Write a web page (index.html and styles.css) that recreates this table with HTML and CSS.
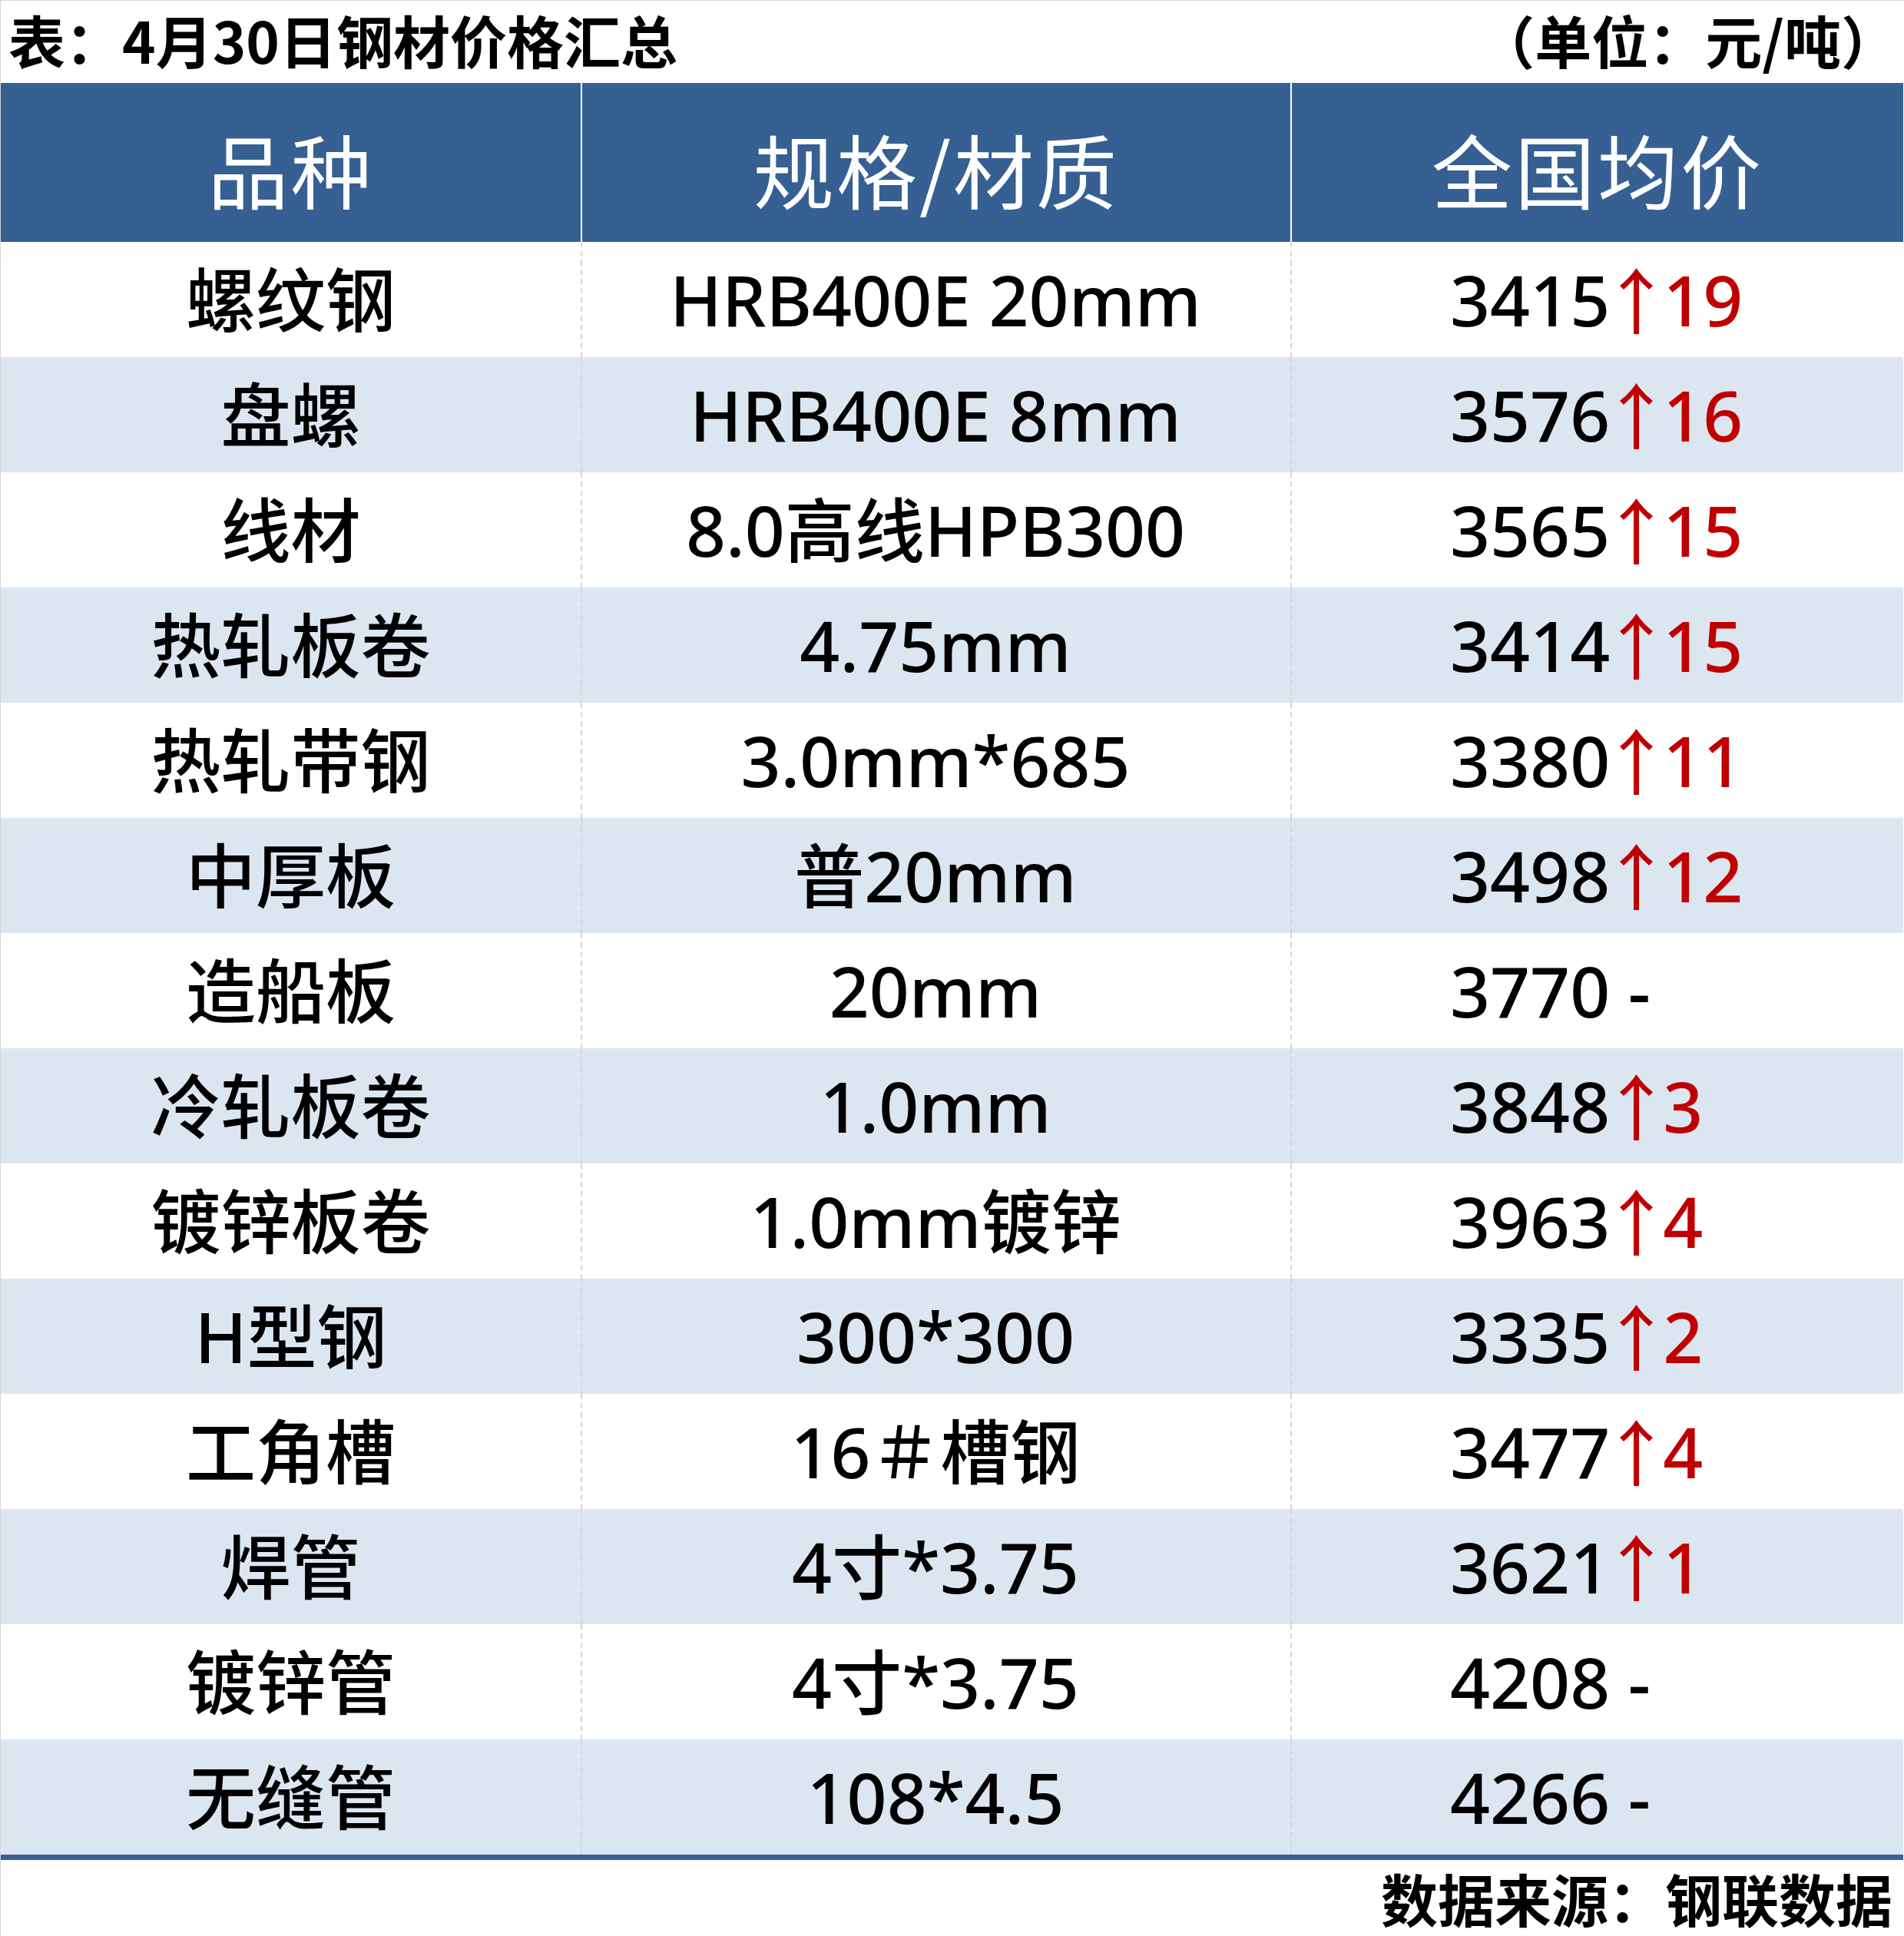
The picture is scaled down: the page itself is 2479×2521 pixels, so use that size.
FILE: index.html
```html
<!DOCTYPE html>
<html lang="zh-CN">
<head>
<meta charset="utf-8">
<title>4月30日钢材价格汇总</title>
<link rel="stylesheet" href="styles.css">
</head>
<body>
<div class="page">
  <div class="title-bar">
    <span class="title">表：4月30日钢材价格汇总</span>
    <span class="unit">（单位：元/吨）</span>
  </div>
  <div class="table">
    <div class="row head">
      <div class="cell c1">品种</div>
      <div class="cell c2">规格/材质</div>
      <div class="cell c3">全国均价</div>
    </div>
    <div class="row">
      <div class="cell c1">螺纹钢</div>
      <div class="cell c2">HRB400E 20mm</div>
      <div class="cell c3"><span class="price">3415</span><svg class="up" viewBox="0 0 69 86"><path d="M34.5 0 Q43 13 56 23 L51 28 Q42 20 34.5 11 Q27 20 18 28 L13 23 Q26 13 34.5 0 Z"/><rect x="31" y="6" width="7" height="80"/></svg><span class="chg">19</span></div>
    </div>
    <div class="row alt">
      <div class="cell c1">盘螺</div>
      <div class="cell c2">HRB400E 8mm</div>
      <div class="cell c3"><span class="price">3576</span><svg class="up" viewBox="0 0 69 86"><path d="M34.5 0 Q43 13 56 23 L51 28 Q42 20 34.5 11 Q27 20 18 28 L13 23 Q26 13 34.5 0 Z"/><rect x="31" y="6" width="7" height="80"/></svg><span class="chg">16</span></div>
    </div>
    <div class="row">
      <div class="cell c1">线材</div>
      <div class="cell c2">8.0高线HPB300</div>
      <div class="cell c3"><span class="price">3565</span><svg class="up" viewBox="0 0 69 86"><path d="M34.5 0 Q43 13 56 23 L51 28 Q42 20 34.5 11 Q27 20 18 28 L13 23 Q26 13 34.5 0 Z"/><rect x="31" y="6" width="7" height="80"/></svg><span class="chg">15</span></div>
    </div>
    <div class="row alt">
      <div class="cell c1">热轧板卷</div>
      <div class="cell c2">4.75mm</div>
      <div class="cell c3"><span class="price">3414</span><svg class="up" viewBox="0 0 69 86"><path d="M34.5 0 Q43 13 56 23 L51 28 Q42 20 34.5 11 Q27 20 18 28 L13 23 Q26 13 34.5 0 Z"/><rect x="31" y="6" width="7" height="80"/></svg><span class="chg">15</span></div>
    </div>
    <div class="row">
      <div class="cell c1">热轧带钢</div>
      <div class="cell c2">3.0mm*685</div>
      <div class="cell c3"><span class="price">3380</span><svg class="up" viewBox="0 0 69 86"><path d="M34.5 0 Q43 13 56 23 L51 28 Q42 20 34.5 11 Q27 20 18 28 L13 23 Q26 13 34.5 0 Z"/><rect x="31" y="6" width="7" height="80"/></svg><span class="chg">11</span></div>
    </div>
    <div class="row alt">
      <div class="cell c1">中厚板</div>
      <div class="cell c2">普20mm</div>
      <div class="cell c3"><span class="price">3498</span><svg class="up" viewBox="0 0 69 86"><path d="M34.5 0 Q43 13 56 23 L51 28 Q42 20 34.5 11 Q27 20 18 28 L13 23 Q26 13 34.5 0 Z"/><rect x="31" y="6" width="7" height="80"/></svg><span class="chg">12</span></div>
    </div>
    <div class="row">
      <div class="cell c1">造船板</div>
      <div class="cell c2">20mm</div>
      <div class="cell c3"><span class="price">3770 -</span></div>
    </div>
    <div class="row alt">
      <div class="cell c1">冷轧板卷</div>
      <div class="cell c2">1.0mm</div>
      <div class="cell c3"><span class="price">3848</span><svg class="up" viewBox="0 0 69 86"><path d="M34.5 0 Q43 13 56 23 L51 28 Q42 20 34.5 11 Q27 20 18 28 L13 23 Q26 13 34.5 0 Z"/><rect x="31" y="6" width="7" height="80"/></svg><span class="chg">3</span></div>
    </div>
    <div class="row">
      <div class="cell c1">镀锌板卷</div>
      <div class="cell c2">1.0mm镀锌</div>
      <div class="cell c3"><span class="price">3963</span><svg class="up" viewBox="0 0 69 86"><path d="M34.5 0 Q43 13 56 23 L51 28 Q42 20 34.5 11 Q27 20 18 28 L13 23 Q26 13 34.5 0 Z"/><rect x="31" y="6" width="7" height="80"/></svg><span class="chg">4</span></div>
    </div>
    <div class="row alt">
      <div class="cell c1">H型钢</div>
      <div class="cell c2">300*300</div>
      <div class="cell c3"><span class="price">3335</span><svg class="up" viewBox="0 0 69 86"><path d="M34.5 0 Q43 13 56 23 L51 28 Q42 20 34.5 11 Q27 20 18 28 L13 23 Q26 13 34.5 0 Z"/><rect x="31" y="6" width="7" height="80"/></svg><span class="chg">2</span></div>
    </div>
    <div class="row">
      <div class="cell c1">工角槽</div>
      <div class="cell c2">16＃槽钢</div>
      <div class="cell c3"><span class="price">3477</span><svg class="up" viewBox="0 0 69 86"><path d="M34.5 0 Q43 13 56 23 L51 28 Q42 20 34.5 11 Q27 20 18 28 L13 23 Q26 13 34.5 0 Z"/><rect x="31" y="6" width="7" height="80"/></svg><span class="chg">4</span></div>
    </div>
    <div class="row alt">
      <div class="cell c1">焊管</div>
      <div class="cell c2">4寸*3.75</div>
      <div class="cell c3"><span class="price">3621</span><svg class="up" viewBox="0 0 69 86"><path d="M34.5 0 Q43 13 56 23 L51 28 Q42 20 34.5 11 Q27 20 18 28 L13 23 Q26 13 34.5 0 Z"/><rect x="31" y="6" width="7" height="80"/></svg><span class="chg">1</span></div>
    </div>
    <div class="row">
      <div class="cell c1">镀锌管</div>
      <div class="cell c2">4寸*3.75</div>
      <div class="cell c3"><span class="price">4208 -</span></div>
    </div>
    <div class="row alt">
      <div class="cell c1">无缝管</div>
      <div class="cell c2">108*4.5</div>
      <div class="cell c3"><span class="price">4266 -</span></div>
    </div>
  </div>
  <div class="footer">数据来源：钢联数据</div>
</div>
</body>
</html>
```

FILE: styles.css
```css
html, body {
  margin: 0;
  padding: 0;
  background: #ffffff;
}

.page {
  width: 2478px;
  height: 2520px;
  border-left: 1px solid #d4d4d4;
  border-top: 1px solid #d4d4d4;
  background: #ffffff;
  color: #000000;
  font-family: "Noto Sans CJK SC", sans-serif;
}

.title-bar {
  height: 107px;
  display: flex;
  justify-content: space-between;
  align-items: flex-start;
  box-sizing: border-box;
  padding: 0 8px 0 10px;
  font-size: 74px;
  line-height: 100px;
  font-weight: 700;
}

.table {
  width: 2477px;
  border-bottom: 7px solid #366092;
}

.row {
  display: grid;
  grid-template-columns: 755px 924px 798px;
  height: 150px;
  background: #ffffff;
}

.row.alt {
  background: #dce6f1;
}

.row.head {
  height: 207px;
  background: #366092;
  color: #ffffff;
}

.cell {
  display: flex;
  align-items: center;
  justify-content: center;
  box-sizing: border-box;
  font-family: "Noto Sans", "Noto Sans CJK SC", sans-serif;
  font-size: 91px;
  font-weight: 500;
  line-height: 1;
  white-space: pre;
}

.row .c2,
.row .c3 {
  background-image: repeating-linear-gradient(to bottom, #d6d6d6 0, #d6d6d6 7px, transparent 7px, transparent 12px);
  background-size: 2px 100%;
  background-repeat: no-repeat;
  background-position: left top;
}

.row.head .cell {
  font-family: "Noto Sans CJK SC", sans-serif;
  font-size: 105px;
  font-weight: 400;
  letter-spacing: 3px;
  padding-top: 14px;
}

.row.head .c2,
.row.head .c3 {
  background-image: none;
  border-left: 2px solid #ffffff;
}

.row .c3 {
  justify-content: flex-start;
  padding-left: 208px;
}

.row.head .c3 {
  justify-content: center;
  padding-left: 0;
}

.up {
  width: 69px;
  height: 86px;
  fill: #c00000;
  align-self: center;
  margin-top: 4px;
  flex: none;
}

.chg {
  color: #c00000;
}

.footer {
  display: flex;
  justify-content: flex-end;
  padding: 12px 15px 0 0;
  font-size: 74px;
  line-height: 1;
  font-weight: 700;
}
```
